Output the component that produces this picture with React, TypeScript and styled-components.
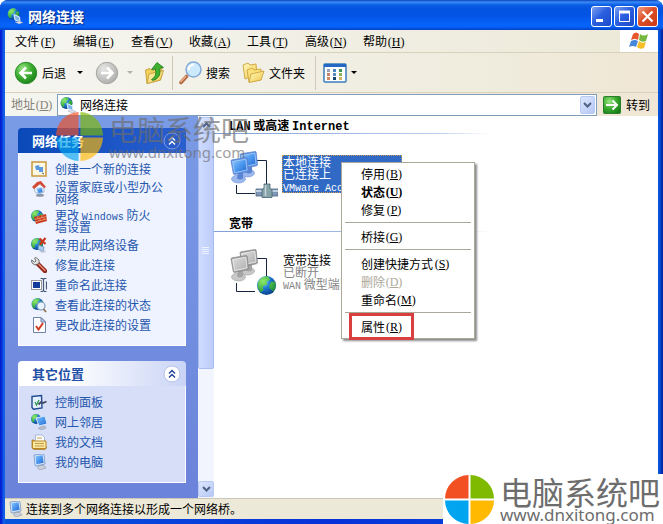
import React, { ReactNode } from "react";
import styled, { createGlobalStyle } from "styled-components";

const GlobalStyle = createGlobalStyle`
  * { box-sizing: border-box; }
  body {
    margin: 0;
    background: #fff;
    color: #000;
    font: 12px/12px "Noto Sans CJK SC", "Liberation Sans", sans-serif;
  }
  button, input { font: inherit; color: inherit; }
  button { border: 0; padding: 0; background: none; white-space: nowrap; }
  ul { list-style: none; margin: 0; padding: 0; }
  h1, h2, p { margin: 0; }
  svg { display: block; flex: none; }
`;

const Page = styled.div`
  position: relative;
`;

const Frame = styled.div`
  padding: 0 5px 5px;
  border-radius: 8px 8px 0 0;
  background: linear-gradient(90deg, #0019cf 0, #0831d9 2px, #166aee 4px, #0855dd 5px, #0831d9 50%, #0855dd calc(100% - 4px), #001ea0 100%);
`;

const TitleBar = styled.header`
  display: flex;
  align-items: center;
  gap: 5px;
  height: 30px;
  margin: 0 -5px;
  padding: 2px 5px 0 7px;
  border-radius: 8px 8px 0 0;
  background: linear-gradient(#0a3fb8 0, #3a8cf8 2px, #0a5ee4 5px, #0453e0 9px, #0455e6 16px, #0664fb 25px, #0561f6 27px, #0140c4 30px);
`;

const Title = styled.h1`
  flex: 1;
  color: #fff;
  font-size: 14px;
  line-height: 18px;
  font-weight: 700;
  text-shadow: 1px 1px 1px #0b2a80;
`;

const WindowButtons = styled.div`
  display: flex;
  gap: 2px;
`;

const WindowButton = styled.button<{ $close?: boolean }>`
  width: 21px;
  height: 21px;
  border: 1px solid #fff;
  border-radius: 3px;
  background: ${(p) =>
    p.$close
      ? "linear-gradient(135deg, #f0a088, #dd4f28 45%, #c93a14)"
      : "linear-gradient(135deg, #7ba2f2, #2b5fe0 45%, #1b4ac8)"};
`;

const MenuBar = styled.nav`
  display: flex;
  height: 23px;
  padding-left: 2px;
  background: linear-gradient(90deg, #f5f5f0, #ece9d8);
  border-bottom: 1px solid #d8d2bd;
`;

const MenuButton = styled.button`
  padding: 0 8px;
`;

const Flag = styled.div`
  display: grid;
  place-items: center;
  width: 38px;
  margin-left: auto;
  background: #fff;
`;

const Key = styled.span`
  display: inline-block;
  width: 18px;
  text-align: center;
  font-family: "Liberation Serif", serif;
  u { text-underline-offset: 1px; }
`;

const ToolBar = styled.div`
  display: flex;
  align-items: center;
  height: 40px;
  padding: 0 9px;
  background: linear-gradient(90deg, #f5f5f0, #efecdd 75%, #f0e6d5);
  border-bottom: 1px solid #d8d2bd;
`;

const ToolButton = styled.button<{ $after: number }>`
  display: flex;
  align-items: center;
  gap: 4px;
  margin-right: ${(p) => p.$after}px;
`;

const Caret = styled.span<{ $dim?: boolean }>`
  border: 3px solid transparent;
  border-top-color: ${(p) => (p.$dim ? "#b4b2a6" : "#000")};
  border-bottom-width: 0;
`;

const Divider = styled.span<{ $after: number }>`
  align-self: stretch;
  width: 1px;
  margin: 3px ${(p) => p.$after}px 2px 0;
  background: #cfcab8;
`;

const AddressBar = styled.form`
  display: flex;
  align-items: center;
  height: 23px;
  padding: 0 8px 0 6px;
  background: linear-gradient(90deg, #f5f5f0, #efecdd 75%, #f0e6d5);
  label { color: #858279; margin-right: 4px; white-space: nowrap; }
`;

const AddressField = styled.div`
  flex: 1;
  min-width: 0;
  display: flex;
  align-items: center;
  gap: 4px;
  height: 22px;
  padding: 0 1px 0 2px;
  border: 1px solid #7f9db9;
  background: #fff;
  input { flex: 1; min-width: 0; border: 0; padding: 0; outline: 0; background: none; height: 18px; }
`;

const DropButton = styled.button`
  display: grid;
  place-items: center;
  width: 15px;
  height: 18px;
  border: 1px solid #b8c9f4;
  border-radius: 2px;
  background: linear-gradient(135deg, #dde6fd, #b6c8f5);
`;

const GoButton = styled.button`
  display: flex;
  align-items: center;
  gap: 5px;
  margin-left: 6px;
`;

const Body = styled.div`
  display: flex;
  background: #fff;
`;

const SideBar = styled.aside`
  display: flex;
  flex-direction: column;
  gap: 15px;
  width: 193px;
  padding: 12px 12px 15px 13px;
  background: linear-gradient(#7a9be6, #6b83da);
`;

const Panel = styled.section<{ $primary?: boolean }>`
  --head: ${(p) => (p.$primary ? "linear-gradient(90deg, #0a49b8, #2a5fd0)" : "linear-gradient(90deg, #fff 30%, #c9d4f6)")};
  --title: ${(p) => (p.$primary ? "#fff" : "#1f4fa6")};
  --body: ${(p) => (p.$primary ? "#eff3ff" : "#d6dff7")};
`;

const PanelHead = styled.div`
  display: flex;
  align-items: center;
  justify-content: space-between;
  height: 25px;
  padding: 0 5px 0 14px;
  border-radius: 4px 4px 0 0;
  background: var(--head);
  h2 { color: var(--title); font-size: 13px; line-height: 16px; font-weight: 700; }
`;

const TaskList = styled.ul`
  display: flex;
  flex-direction: column;
  gap: 4px;
  padding: 8px 11px 12px 12px;
  border: solid #fff;
  border-width: 0 1px 1px;
  background: var(--body);
`;

const Task = styled.a`
  display: flex;
  align-items: center;
  gap: 8px;
  min-height: 16px;
  color: #2456ad;
  text-decoration: none;
  white-space: nowrap;
  svg { align-self: flex-start; }
`;

const Latin = styled.span<{ $large?: boolean }>`
  font-family: "Liberation Mono", monospace;
  font-size: ${(p) => (p.$large ? 12 : 10)}px;
  line-height: 1px;
`;

const ScrollBar = styled.div`
  display: flex;
  flex-direction: column;
  width: 16px;
  padding: 1px 0;
  background: #f2f5fd;
`;

const ScrollButton = styled(DropButton)`
  width: 16px;
  height: 16px;
`;

const Thumb = styled.div`
  display: grid;
  place-items: center;
  flex: 0 1 236px;
  margin-bottom: auto;
  border: 1px solid #a9bdf0;
  border-radius: 2px;
  background: linear-gradient(90deg, #cfdcff, #bccdfa);
`;

const Listing = styled.main`
  flex: 1;
  min-width: 0;
`;

const GroupTitle = styled.h2`
  height: 18px;
  padding-left: 15px;
  font-size: 12px;
  line-height: 18px;
  font-weight: 700;
  border-bottom: 1px solid;
  border-image: linear-gradient(90deg, #7e9fd8, #b9cdee 50%, #fff 62%) 1;
`;

const Connection = styled.div`
  display: flex;
  align-items: flex-start;
  gap: 4px;
  padding: 16px;
`;

const Details = styled.div<{ $selected?: boolean }>`
  width: 120px;
  margin-top: 5px;
  border: 1px ${(p) => (p.$selected ? "dotted #c99a52" : "solid transparent")};
  background: ${(p) => (p.$selected ? "#316ac5" : "none")};
  color: ${(p) => (p.$selected ? "#fff" : "#848484")};
  p { white-space: nowrap; }
  p:first-child { color: ${(p) => (p.$selected ? "#fff" : "#000")}; }
`;

const StatusBar = styled.footer`
  display: flex;
  align-items: center;
  gap: 3px;
  height: 21px;
  padding-left: 2px;
  border-top: 1px solid #cbc7b8;
  background: #ece9d8;
`;

const ContextMenu = styled.div`
  position: absolute;
  left: 341px;
  top: 162px;
  width: 134px;
  padding: 2px;
  border: 1px solid #aca899;
  background: #fff;
  box-shadow: 2px 2px 2px #8b8b8b;
`;

const MenuItem = styled.button<{ $bold?: boolean }>`
  display: flex;
  align-items: center;
  width: 100%;
  height: 18px;
  padding-left: 17px;
  font-weight: ${(p) => (p.$bold ? 700 : 400)};
  &:disabled { color: #aca899; }
`;

const Rule = styled.hr`
  height: 1px;
  margin: 3px 1px 5px;
  border: 0;
  background: #aca899;
`;

const Highlight = styled.div`
  position: absolute;
  left: 7px;
  bottom: -2px;
  width: 65px;
  height: 27px;
  border: 3px solid #d8403f;
`;

const Brand = styled.div<{ $faded?: boolean }>`
  position: absolute;
  display: flex;
  align-items: center;
  color: #6d6d6d;
  ${(p) =>
    p.$faded
      ? "left: 56px; top: 112px; gap: 6px; opacity: 0.65; pointer-events: none;"
      : "right: 0; bottom: 0; width: 220px; height: 50px; gap: 6px; padding-left: 2px; background: #fff;"}
`;

const BrandText = styled.div<{ $small?: boolean }>`
  white-space: nowrap;
  font-size: ${(p) => (p.$small ? 28 : 32)}px;
  line-height: ${(p) => (p.$small ? 30 : 32)}px;
  p {
    font-family: "Noto Sans", sans-serif;
    font-size: ${(p) => (p.$small ? 15 : 17)}px;
    line-height: 16px;
  }
`;

const Gradients = () => (
  <svg width="0" height="0" aria-hidden>
    <defs>
      <linearGradient id="screen" x1="0" y1="0" x2="1" y2="1">
        <stop offset="0" stopColor="#8ec8fb" /><stop offset=".5" stopColor="#4b98ee" /><stop offset="1" stopColor="#2668d0" />
      </linearGradient>
      <linearGradient id="screenOff" x1="0" y1="0" x2="1" y2="1">
        <stop offset="0" stopColor="#dcdcdc" /><stop offset="1" stopColor="#b0b0b0" />
      </linearGradient>
      <radialGradient id="earth" cx=".35" cy=".3" r=".8">
        <stop offset="0" stopColor="#8bdcf8" /><stop offset=".45" stopColor="#1c78d2" /><stop offset="1" stopColor="#06377e" />
      </radialGradient>
      <radialGradient id="land" cx=".3" cy=".3" r=".8">
        <stop offset="0" stopColor="#8eea6a" /><stop offset="1" stopColor="#1e9436" />
      </radialGradient>
      <radialGradient id="green" cx=".35" cy=".3" r=".8">
        <stop offset="0" stopColor="#9be583" /><stop offset=".5" stopColor="#3cad31" /><stop offset="1" stopColor="#167c18" />
      </radialGradient>
      <radialGradient id="grey" cx=".35" cy=".3" r=".8">
        <stop offset="0" stopColor="#e6e6e4" /><stop offset="1" stopColor="#a9a9a7" />
      </radialGradient>
      <linearGradient id="folder" x1="0" y1="0" x2="1" y2="1">
        <stop offset="0" stopColor="#fffac0" /><stop offset="1" stopColor="#f0c648" />
      </linearGradient>
    </defs>
  </svg>
);

const Icon = ({ children }: { children: ReactNode }) => (
  <svg width="16" height="16" viewBox="0 0 16 16" aria-hidden>{children}</svg>
);

const Earth = ({ x, y, r }: { x: number; y: number; r: number }) => (
  <g transform={`translate(${x} ${y}) scale(${r / 10})`}>
    <circle r="10" fill="url(#earth)" />
    <path d="M-9-3C-7-8-3-10 2-9.500L4-6 0-4 1-1-4 1-3 5-6 7C-9 4-10 1-9-3ZM5-4 9-4C10 0 10 3 7 6L3 3 3 0Z" fill="url(#land)" />
  </g>
);

const Monitor = ({ x, y, off }: { x: number; y: number; off?: boolean }) => (
  <g transform={`translate(${x} ${y})`}>
    <ellipse cx="7.500" cy="21.500" rx="7" ry="4" fill={off ? "#c9c9c9" : "#9bb9ec"} stroke={off ? "#9c9c9c" : "#6f90d4"} strokeWidth=".6" />
    <path d="M7 15 12 14 12 21Q9 23 6 21Z" fill={off ? "#a5a5a5" : "#5b85d4"} />
    <path d="M0 3.500Q0 2.500 1 2.300L15 0Q16 0 16.200 1L17.500 13Q17.500 14 16.500 14.300L3.500 17Q2.500 17 2.300 16Z" fill={off ? "#9a9a9a" : "#5d8fe4"} stroke={off ? "#8a8a8a" : "#5a7fc8"} strokeWidth=".7" />
    <path d="M1.500 4 14.800 1.700 16 12.500 3.600 15.200Z" fill={off ? "url(#screenOff)" : "url(#screen)"} stroke={off ? "#f2f2f2" : "#a9d2fb"} strokeWidth=".8" />
  </g>
);

const NetGlobeIcon = () => (
  <Icon>
    <Earth x={6.5} y={6} r={6} />
    <path d="M7 6.500 12.500 9 13 13.500 8 12Z" fill="#7db4ee" stroke="#e6f2ff" /><path d="M8 14 13 13.500 16 14.500 12 16Z" fill="#e4e8ef" stroke="#8a98ad" strokeWidth=".4" />
  </Icon>
);

const ComputerIcon = () => (
  <Icon>
    <path d="M3 1 12 0Q13 0 13 1L14 10 5 12Q4 12 4 11Z" fill="#d7e6f8" stroke="#4f7ab9" strokeWidth=".6" />
    <path d="M4.500 2.200 11.500 1.300 12.600 8.800 5.400 10.200Z" fill="url(#screen)" />
    <path d="M6 13.500 9 11.500 13 11.500 15 14 9 16Z" fill="#c8cfda" stroke="#7f8a9b" strokeWidth=".5" />
  </Icon>
);

const NewIcon = () => (
  <Icon>
    <rect x="1" y="1" width="14" height="14" fill="#fdf8e3" stroke="#c8993c" strokeWidth="1.500" />
    <path d="M4 5 8 4 9 9 5 9ZM8 6 12 6 12 11 8 11Z" fill="#5b98e2" /><path d="M11 12 13 13" stroke="#465" />
  </Icon>
);

const HomeIcon = () => (
  <Icon>
    <path d="M3 7 8 3 13 6 13 11 8 13 4 11Z" fill="#f4f6fa" stroke="#8091ae" strokeWidth=".6" />
    <path d="M1 6 6 1 10 0 15 6 13 7 9 3 3 8Z" fill="#d44b35" />
    <path d="M5.500 7.500 11 6.500 12 11.500 7 12.500Z" fill="url(#screen)" stroke="#c3daf5" strokeWidth=".7" /><ellipse cx="9" cy="14.300" rx="4" ry="1.500" fill="#8d97a8" />
  </Icon>
);

const FirewallIcon = () => (
  <Icon>
    <Earth x={6} y={7} r={6} />
    <path d="M3 8 15 5 16 12 5 15Z" fill="#c43a20" /><path d="M3.500 10.500 15.500 7.500M4 12.800 16 10M7 7 7 10M11 6 11 9M9 9.500V12M13 8.500V11" stroke="#f5aa80" strokeWidth=".7" />
  </Icon>
);

const DisableIcon = () => (
  <Icon>
    <Earth x={6} y={7} r={6} />
    <path d="M7.500 8 13 10 12.500 14 7 12.500Z" fill="#a8cdf2" stroke="#5c7dae" strokeWidth=".6" /><path d="M8 14.500 14 13.500 15 15 11 16Z" fill="#c3cad6" />
    <path d="M8.500 1.500 14.500 7M14.500 1 9 7.500" stroke="#c9341e" strokeWidth="2.200" />
  </Icon>
);

const RepairIcon = () => (
  <Icon>
    <path d="M6 6 14 14" stroke="#8f2419" strokeWidth="4.500" strokeLinecap="round" /><path d="M7 6.500 14 13.500" stroke="#ea8b70" strokeWidth="1.500" strokeLinecap="round" />
    <path d="M.5 3 1 6 4 8 8 6.500 8 3 5 .5 3.500 1.200 5 4 3.500 5Z" fill="#e6e6e3" stroke="#555" strokeWidth=".8" />
  </Icon>
);

const RenameIcon = () => (
  <Icon>
    <rect x=".5" y="3.500" width="10" height="9" fill="#fff" stroke="#999" /><rect x="2" y="5" width="7" height="6" fill="#123b9c" />
    <path d="M9.500 1.500H11.500L12.500 2.500 13.500 1.500H15.500M12.500 2V14M9.500 14.500H11.500L12.500 13.500 13.500 14.500H15.500M15.500 4.500V12.500" stroke="#465776" strokeWidth="1.200" fill="none" />
  </Icon>
);

const StatusIcon = () => (
  <Icon>
    <Earth x={6.5} y={7} r={6} />
    <circle cx="10" cy="9" r="4" fill="#e8f4fd" stroke="#7898bd" strokeWidth="1.200" /><path d="M12.500 12 15 15" stroke="#8c6e4b" strokeWidth="1.800" />
  </Icon>
);

const SettingsIcon = () => (
  <Icon>
    <path d="M2.500.500H10L14.500 5V15.500H2.500Z" fill="#fff" stroke="#6f83a8" /><path d="M10 .5V5H14.500Z" fill="#becbe3" stroke="#6f83a8" />
    <path d="M5 9 7.500 12.500 12 6" stroke="#d23b23" strokeWidth="2" fill="none" />
  </Icon>
);

const ControlIcon = () => (
  <Icon>
    <path d="M1 2.500 10.500 1.500 11 14 2.500 15.300 1 13.500Z" fill="#e2f0ff" stroke="#234a92" strokeWidth="1.400" />
    <path d="M4 8 5.500 11 8 6" stroke="#2d9a45" strokeWidth="1.300" fill="none" /><path d="M7.500 10.500 10 8 12 9 15.500 7.500" stroke="#3d4a60" strokeWidth="1.800" fill="none" />
  </Icon>
);

const NeighborIcon = () => (
  <Icon>
    <Earth x={5} y={5} r={5} />
    <path d="M5 4 14 2 16 10 8 12Z" fill="url(#screen)" stroke="#dae8fa" /><path d="M7 14.500 10 12.500 14 12 15 14 11 16Z" fill="#b6bdcc" stroke="#8891a3" strokeWidth=".4" />
  </Icon>
);

const DocumentsIcon = () => (
  <Icon>
    <path d="M1 6H3V13H16L14 15.500H3L1 14Z" fill="#e5a92c" stroke="#a27220" strokeWidth=".7" /><path d="M4.500 1H11L13.500 3.500V8H4.500Z" fill="#fff" stroke="#8ba0c0" strokeWidth=".7" />
    <path d="M1.500 7H15V14.500H1.500Z" fill="#fbe9a0" stroke="#b98727" /><path d="M4 9.500H13M4 12H13M6 4H11" stroke="#c29a4b" />
  </Icon>
);

const UpFolderIcon = () => (
  <svg width="21" height="24" viewBox="0 0 21 24" aria-hidden>
    <path d="M1.500 9 6 7.500 8 9.500 18 6.500 16.500 19 3 22.500Z" fill="#f3cf5c" stroke="#c9a540" />
    <path d="M3 22.500 5 13 19.500 9.500 16.500 19Z" fill="url(#folder)" stroke="#c9a540" />
    <path d="M7.500 18.500Q13 16 11.500 8L7.500 8.500 13 1.500 19.500 6.500 15.800 7.300Q17.500 17 9 19.500Z" fill="#3fb02f" stroke="#1b7c18" strokeWidth=".8" />
  </svg>
);

const SearchIcon = () => (
  <svg width="24" height="24" viewBox="0 0 24 24" aria-hidden>
    <path d="M8.500 15.500 3 21.500" stroke="#b66a45" strokeWidth="3.600" strokeLinecap="round" /><path d="M8 15 2.500 21" stroke="#e8b090" strokeWidth="1.500" />
    <circle cx="15.500" cy="8.500" r="7.500" fill="#cdeafd" stroke="#86abd8" strokeWidth="1.500" /><path d="M10.500 9Q11 4 16 3.500" stroke="#fff" strokeWidth="2" fill="none" />
  </svg>
);

const FoldersIcon = () => (
  <svg width="23" height="22" viewBox="0 0 23 22" aria-hidden>
    <path d="M1 3 6 1 8 3 14 2 15 12 3 17Z" fill="url(#folder)" stroke="#d0ab49" />
    <path d="M5 8 10 6 12 8 19 7 19 18 7 20Z" fill="#fbe07a" stroke="#d0ab49" /><path d="M9 12 22 9 19 18 7 20.500Z" fill="url(#folder)" stroke="#d0ab49" />
  </svg>
);

const ViewsIcon = () => (
  <svg width="24" height="20" viewBox="0 0 24 20" aria-hidden>
    <rect x="1" y="1" width="22" height="18" rx="1" fill="#fff" stroke="#3a7dbd" strokeWidth="1.500" /><path d="M1 1H23V4H1Z" fill="#2468c4" />
    {[6, 10, 14].map((y, row) => [4, 10, 16].map((x, col) => (
      <rect key={`${x}-${y}`} x={x} y={y} width="3" height="3" fill={[["#9aa1b5", "#4a86c5", "#3f9355"], ["#c5806f", "#5a8cc0", "#8fae54"], ["#d08a62", "#18456e", "#d0b45e"]][row][col]} />
    )))}
  </svg>
);

const RoundArrow = ({ back }: { back?: boolean }) => (
  <svg width="24" height="24" viewBox="0 0 24 24" aria-hidden>
    <circle cx="12" cy="12" r="10.700" fill={back ? "url(#green)" : "url(#grey)"} stroke={back ? "#2c8d29" : "#a5a5a2"} />
    <path d={back ? "M18 12H7M12 6.500 6.500 12 12 17.500" : "M6 12H17M12 6.500 17.500 12 12 17.500"} stroke="#fff" strokeWidth="2.600" fill="none" />
  </svg>
);

const GoIcon = () => (
  <svg width="18" height="18" viewBox="0 0 18 18" aria-hidden>
    <rect x=".5" y=".5" width="17" height="17" rx="1" fill="url(#green)" stroke="#2b7f2c" />
    <path d="M3 9H14M9.500 4.500 14 9 9.500 13.500" stroke="#fff" strokeWidth="2" fill="none" />
  </svg>
);

const WindowsFlag = () => (
  <svg width="20" height="18" viewBox="0 0 20 18" aria-hidden>
    <path d="M4 2Q7-1 10 2L9 8Q6 6 2 8Z" fill="#e8562c" /><path d="M11 2Q15 5 19 2L17 9Q13 11 10 8Z" fill="#76b83f" />
    <path d="M2 9Q6 7 9 9L7 15Q4 13 0 15Z" fill="#4687dc" /><path d="M10 9Q13 12 17 10L15 16Q11 18 8 15Z" fill="#f5bd28" />
  </svg>
);

const Chevron = ({ up }: { up?: boolean }) => (
  <svg width="9" height="6" viewBox="0 0 9 6" aria-hidden>
    <path d={up ? "M1 5 4.500 1.500 8 5" : "M1 1 4.500 4.500 8 1"} fill="none" stroke="#4d6185" strokeWidth="2" />
  </svg>
);

const CollapseIcon = ({ primary }: { primary?: boolean }) => (
  <svg width="18" height="18" viewBox="0 0 18 18" aria-hidden>
    <circle cx="9" cy="9" r="8" fill={primary ? "#2a5cc9" : "#fff"} stroke={primary ? "#7d9be5" : "#b7c3e3"} />
    <path d="M6 8.500 9 5.500 12 8.500M6 12.500 9 9.500 12 12.500" fill="none" stroke={primary ? "#fff" : "#1f3f94"} strokeWidth="1.400" />
  </svg>
);

const ConnectionIcon = ({ off }: { off?: boolean }) => (
  <svg width="48" height="48" viewBox="0 0 48 48" aria-hidden>
    <path d="M27 10.500H36.500V34M6.500 35V43.500H25" fill="none" stroke="#16243f" />
    <Monitor x={10} y={1.500} off={off} />
    <Monitor x={1} y={7.500} off={off} />
    {off ? <Earth x={36.5} y={37.5} r={9.5} /> : (
      <g>
        <path d="M26 39H48V46H26Z" fill="#7d97b4" stroke="#4d647f" strokeWidth=".8" />
        <path d="M26 41H48" stroke="#bfd0de" strokeWidth="2" />
        <path d="M34 34H40V38L42 40V47.500H32V40L34 38Z" fill="#86a3a8" stroke="#4a6274" strokeWidth=".8" /><path d="M35.500 35V46" stroke="#c4d6dc" strokeWidth="1.500" />
      </g>
    )}
  </svg>
);

const BrandLogo = ({ size }: { size: number }) => (
  <svg width={size} height="49" viewBox="0 0 49 49" preserveAspectRatio="none" aria-hidden>
    <path d="M23.500 0V23.500H0A24 24 0 0 1 23.500 0Z" fill="#f25022" /><path d="M25.500 0V23.500H49A24 24 0 0 0 25.500 0Z" fill="#7fba00" />
    <path d="M23.500 49V25.500H0A24 24 0 0 0 23.500 49Z" fill="#00a4ef" /><path d="M25.500 49V25.500H49A24 24 0 0 1 25.500 49Z" fill="#ffb900" />
  </svg>
);

const Mnemonic = ({ k }: { k: string }) => <Key>(<u>{k}</u>)</Key>;

const menus = [["文件", "F"], ["编辑", "E"], ["查看", "V"], ["收藏", "A"], ["工具", "T"], ["高级", "N"], ["帮助", "H"]];

const tasks: [ReactNode, ReactNode][] = [
  [<NewIcon />, "创建一个新的连接"],
  [<HomeIcon />, <>设置家庭或小型办公<br />网络</>],
  [<FirewallIcon />, <>更改 <Latin>Windows</Latin> 防火<br />墙设置</>],
  [<DisableIcon />, "禁用此网络设备"],
  [<RepairIcon />, "修复此连接"],
  [<RenameIcon />, "重命名此连接"],
  [<StatusIcon />, "查看此连接的状态"],
  [<SettingsIcon />, "更改此连接的设置"],
];

const places: [ReactNode, ReactNode][] = [
  [<ControlIcon />, "控制面板"],
  [<NeighborIcon />, "网上邻居"],
  [<DocumentsIcon />, "我的文档"],
  [<ComputerIcon />, "我的电脑"],
];

const TaskPanel = ({ title, items, primary }: { title: string; items: [ReactNode, ReactNode][]; primary?: boolean }) => (
  <Panel $primary={primary}>
    <PanelHead>
      <h2>{title}</h2>
      <button aria-label={`折叠${title}`}><CollapseIcon primary={primary} /></button>
    </PanelHead>
    <TaskList>
      {items.map(([icon, label], i) => (
        <li key={i}><Task href="#">{icon}<span>{label}</span></Task></li>
      ))}
    </TaskList>
  </Panel>
);

const SiteBrand = ({ faded }: { faded?: boolean }) => (
  <Brand $faded={faded}>
    <BrandLogo size={faded ? 47 : 49} />
    <BrandText $small={faded}>电脑系统吧<p>www.dnxitong.com</p></BrandText>
  </Brand>
);

export default function App() {
  return (
    <Page>
      <GlobalStyle />
      <Gradients />
      <Frame>
        <TitleBar>
          <NetGlobeIcon />
          <Title>网络连接</Title>
          <WindowButtons>
            <WindowButton aria-label="最小化">
              <svg width="19" height="19" aria-hidden><path d="M4 13.500H11" stroke="#fff" strokeWidth="3" /></svg>
            </WindowButton>
            <WindowButton aria-label="最大化">
              <svg width="19" height="19" aria-hidden><path d="M4.500 4V14.500H14.500V4" stroke="#fff" fill="none" /><path d="M4 5H15" stroke="#fff" strokeWidth="3" /></svg>
            </WindowButton>
            <WindowButton $close aria-label="关闭">
              <svg width="19" height="19" aria-hidden><path d="M4.500 4.500 14.500 14.500M14.500 4.500 4.500 14.500" stroke="#fff" strokeWidth="2.200" /></svg>
            </WindowButton>
          </WindowButtons>
        </TitleBar>
        <MenuBar>
          {menus.map(([label, key]) => <MenuButton key={key}>{label}<Mnemonic k={key} /></MenuButton>)}
          <Flag><WindowsFlag /></Flag>
        </MenuBar>
        <ToolBar>
          <ToolButton $after={11}><RoundArrow back />后退</ToolButton>
          <ToolButton $after={12} aria-label="后退历史"><Caret /></ToolButton>
          <ToolButton $after={8} aria-label="前进"><RoundArrow /></ToolButton>
          <ToolButton $after={11} aria-label="前进历史"><Caret $dim /></ToolButton>
          <ToolButton $after={7} aria-label="向上"><UpFolderIcon /></ToolButton>
          <Divider $after={5} />
          <ToolButton $after={12}><SearchIcon />搜索</ToolButton>
          <ToolButton $after={10}><FoldersIcon />文件夹</ToolButton>
          <Divider $after={7} />
          <ToolButton $after={0} aria-label="查看方式"><ViewsIcon /><Caret /></ToolButton>
        </ToolBar>
        <AddressBar onSubmit={(e) => e.preventDefault()}>
          <label htmlFor="address">地址<Mnemonic k="D" /></label>
          <AddressField>
            <NetGlobeIcon />
            <input id="address" defaultValue="网络连接" />
            <DropButton type="button" aria-label="显示地址列表"><Chevron /></DropButton>
          </AddressField>
          <GoButton><GoIcon />转到</GoButton>
        </AddressBar>
        <Body>
          <SideBar>
            <TaskPanel title="网络任务" items={tasks} primary />
            <TaskPanel title="其它位置" items={places} />
          </SideBar>
          <ScrollBar>
            <ScrollButton aria-label="向上滚动"><Chevron up /></ScrollButton>
            <Thumb>
              <svg width="8" height="8" aria-hidden><path d="M0 .5H7M0 2.500H7M0 4.500H7M0 6.500H7" stroke="#eef3ff" /></svg>
            </Thumb>
            <ScrollButton aria-label="向下滚动"><Chevron /></ScrollButton>
          </ScrollBar>
          <Listing>
            <GroupTitle><Latin $large>LAN</Latin> 或高速 <Latin $large>Internet</Latin></GroupTitle>
            <Connection>
              <ConnectionIcon />
              <Details $selected>
                <p>本地连接</p>
                <p>已连接上</p>
                <p><Latin>VMware Accelerated</Latin></p>
              </Details>
            </Connection>
            <GroupTitle>宽带</GroupTitle>
            <Connection>
              <ConnectionIcon off />
              <Details>
                <p>宽带连接</p>
                <p>已断开</p>
                <p><Latin>WAN</Latin> 微型端口</p>
              </Details>
            </Connection>
          </Listing>
        </Body>
        <StatusBar><ComputerIcon />连接到多个网络连接以形成一个网络桥。</StatusBar>
      </Frame>
      <ContextMenu>
        <MenuItem>停用<Mnemonic k="B" /></MenuItem>
        <MenuItem $bold>状态<Mnemonic k="U" /></MenuItem>
        <MenuItem>修复<Mnemonic k="P" /></MenuItem>
        <Rule />
        <MenuItem>桥接<Mnemonic k="G" /></MenuItem>
        <Rule />
        <MenuItem>创建快捷方式<Mnemonic k="S" /></MenuItem>
        <MenuItem disabled>删除<Mnemonic k="D" /></MenuItem>
        <MenuItem>重命名<Mnemonic k="M" /></MenuItem>
        <Rule />
        <MenuItem>属性<Mnemonic k="R" /></MenuItem>
        <Highlight />
      </ContextMenu>
      <SiteBrand faded />
      <SiteBrand />
    </Page>
  );
}
